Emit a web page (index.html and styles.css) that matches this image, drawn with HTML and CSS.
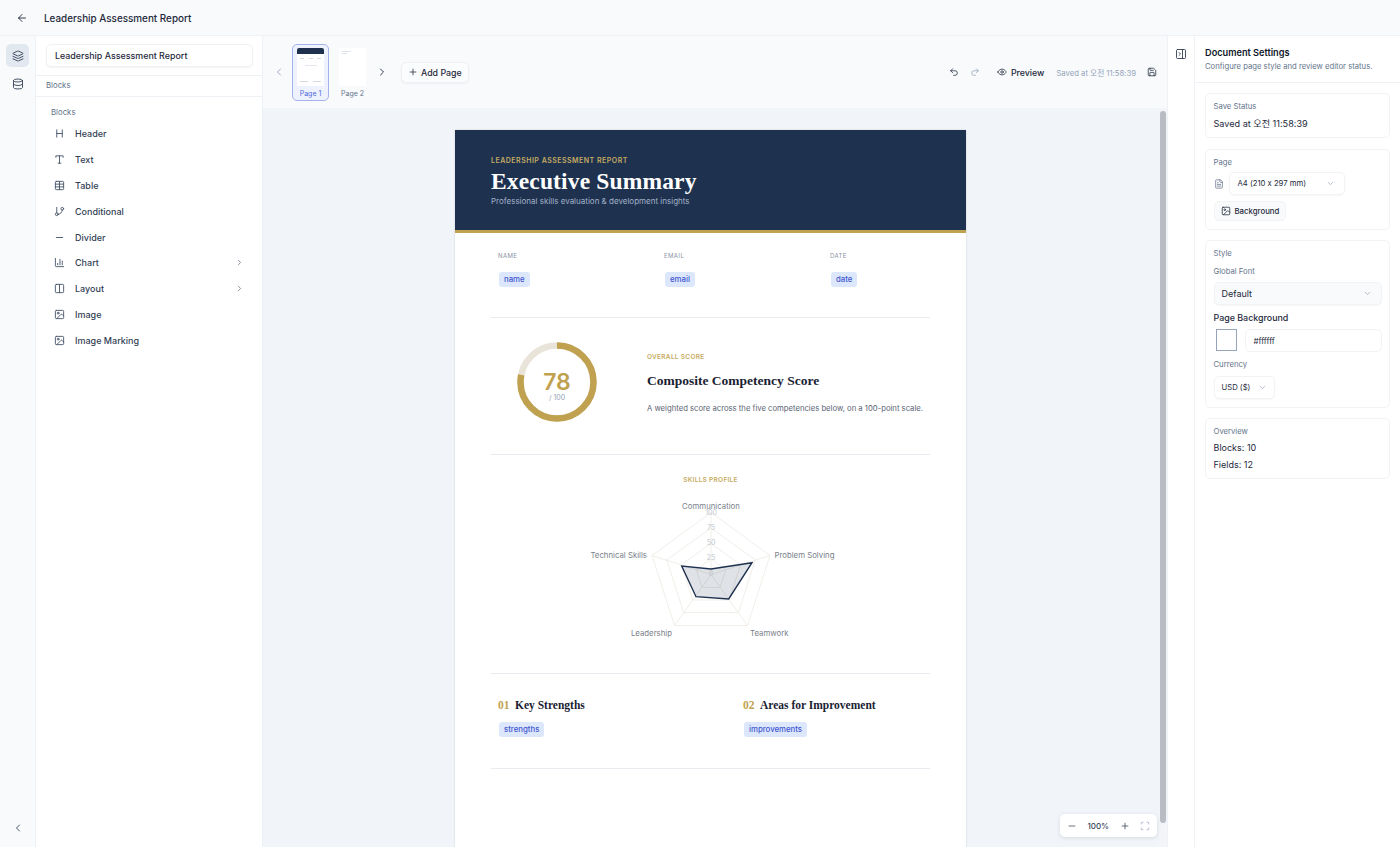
FILE: index.html
```html
<!DOCTYPE html>
<html lang="en">
<head>
    <meta charset="UTF-8">
    <title>Leadership Assessment Report</title>
    <link rel="stylesheet" href="styles.css">
</head>
<body>
    <svg class="sprite" xmlns="http://www.w3.org/2000/svg">
        <symbol id="i-back" viewBox="0 0 24 24"><path d="M12 19l-7-7 7-7M19 12H5"/></symbol>
        <symbol id="i-layers" viewBox="0 0 24 24"><path d="m12.83 2.18a2 2 0 0 0-1.66 0L2.6 6.08a1 1 0 0 0 0 1.83l8.58 3.91a2 2 0 0 0 1.66 0l8.58-3.9a1 1 0 0 0 0-1.83Z"/><path d="m22 17.65-9.17 4.16a2 2 0 0 1-1.66 0L2 17.65"/><path d="m22 12.65-9.17 4.16a2 2 0 0 1-1.66 0L2 12.65"/></symbol>
        <symbol id="i-db" viewBox="0 0 24 24"><ellipse cx="12" cy="5" rx="9" ry="3"/><path d="M3 5V19A9 3 0 0 0 21 19V5"/><path d="M3 12A9 3 0 0 0 21 12"/></symbol>
        <symbol id="i-heading" viewBox="0 0 24 24"><path d="M6 12h12M6 20V4M18 20V4"/></symbol>
        <symbol id="i-type" viewBox="0 0 24 24"><path d="M4 7V4h16v3M9 20h6M12 4v16"/></symbol>
        <symbol id="i-table" viewBox="0 0 24 24"><rect x="3" y="3" width="18" height="18" rx="2"/><path d="M12 3v18M3 9h18M3 15h18"/></symbol>
        <symbol id="i-branch" viewBox="0 0 24 24"><path d="M6 3v12"/><circle cx="18" cy="6" r="3"/><circle cx="6" cy="18" r="3"/><path d="M18 9a9 9 0 0 1-9 9"/></symbol>
        <symbol id="i-minus" viewBox="0 0 24 24"><path d="M5 12h14"/></symbol>
        <symbol id="i-chart" viewBox="0 0 24 24"><path d="M3 3v16a2 2 0 0 0 2 2h16M18 17V9M13 17V5M8 17v-3"/></symbol>
        <symbol id="i-columns" viewBox="0 0 24 24"><rect x="3" y="3" width="18" height="18" rx="2"/><path d="M12 3v18"/></symbol>
        <symbol id="i-image" viewBox="0 0 24 24"><rect x="3" y="3" width="18" height="18" rx="2"/><circle cx="9" cy="9" r="2"/><path d="m21 15-3.086-3.086a2 2 0 0 0-2.828 0L6 21"/></symbol>
        <symbol id="i-right" viewBox="0 0 24 24"><path d="m9 18 6-6-6-6"/></symbol>
        <symbol id="i-left" viewBox="0 0 24 24"><path d="m15 18-6-6 6-6"/></symbol>
        <symbol id="i-down" viewBox="0 0 24 24"><path d="m6 9 6 6 6-6"/></symbol>
        <symbol id="i-plus" viewBox="0 0 24 24"><path d="M5 12h14M12 5v14"/></symbol>
        <symbol id="i-undo" viewBox="0 0 24 24"><path d="M9 14 4 9l5-5"/><path d="M4 9h10.5a5.5 5.5 0 0 1 5.5 5.5a5.5 5.5 0 0 1-5.5 5.5H11"/></symbol>
        <symbol id="i-redo" viewBox="0 0 24 24"><path d="m15 14 5-5-5-5"/><path d="M20 9H9.5A5.5 5.5 0 0 0 4 14.5A5.5 5.5 0 0 0 9.5 20H13"/></symbol>
        <symbol id="i-eye" viewBox="0 0 24 24"><path d="M2 12s3-7 10-7 10 7 10 7-3 7-10 7-10-7-10-7Z"/><circle cx="12" cy="12" r="3"/></symbol>
        <symbol id="i-save" viewBox="0 0 24 24"><path d="M15.2 3a2 2 0 0 1 1.4.6l3.8 3.8a2 2 0 0 1 .6 1.4V19a2 2 0 0 1-2 2H5a2 2 0 0 1-2-2V5a2 2 0 0 1 2-2z"/><path d="M17 21v-7a1 1 0 0 0-1-1H8a1 1 0 0 0-1 1v7"/><path d="M7 3v4a1 1 0 0 0 1 1h7"/></symbol>
        <symbol id="i-panel" viewBox="0 0 24 24"><rect x="3" y="3" width="18" height="18" rx="2"/><path d="M15 3v18M8 9l3 3-3 3"/></symbol>
        <symbol id="i-file" viewBox="0 0 24 24"><path d="M15 2H6a2 2 0 0 0-2 2v16a2 2 0 0 0 2 2h12a2 2 0 0 0 2-2V7Z"/><path d="M14 2v4a2 2 0 0 0 2 2h4M10 9H8M16 13H8M16 17H8"/></symbol>
        <symbol id="i-fit" viewBox="0 0 24 24"><path d="M3 7V5a2 2 0 0 1 2-2h2M17 3h2a2 2 0 0 1 2 2v2M21 17v2a2 2 0 0 1-2 2h-2M7 21H5a2 2 0 0 1-2-2v-2"/></symbol>
    </svg>

    <header class="topbar">
        <svg class="icon back-icon"><use href="#i-back"/></svg>
        <span class="doc-title">Leadership Assessment Report</span>
    </header>

    <div class="workspace">
        <!-- left icon rail -->
        <nav class="rail">
            <button class="rail-btn active"><svg class="icon"><use href="#i-layers"/></svg></button>
            <button class="rail-btn"><svg class="icon"><use href="#i-db"/></svg></button>
            <button class="rail-btn collapse"><svg class="icon"><use href="#i-left"/></svg></button>
        </nav>

        <!-- blocks panel -->
        <aside class="blocks-panel">
            <div class="name-wrap"><div class="name-input">Leadership Assessment Report</div></div>
            <div class="tab-label">Blocks</div>
            <div class="block-list">
                <div class="group-label">Blocks</div>
                <div class="block-item"><svg class="icon"><use href="#i-heading"/></svg><span>Header</span></div>
                <div class="block-item"><svg class="icon"><use href="#i-type"/></svg><span>Text</span></div>
                <div class="block-item"><svg class="icon"><use href="#i-table"/></svg><span>Table</span></div>
                <div class="block-item"><svg class="icon"><use href="#i-branch"/></svg><span>Conditional</span></div>
                <div class="block-item"><svg class="icon"><use href="#i-minus"/></svg><span>Divider</span></div>
                <div class="block-item"><svg class="icon"><use href="#i-chart"/></svg><span>Chart</span><svg class="icon more"><use href="#i-right"/></svg></div>
                <div class="block-item"><svg class="icon"><use href="#i-columns"/></svg><span>Layout</span><svg class="icon more"><use href="#i-right"/></svg></div>
                <div class="block-item"><svg class="icon"><use href="#i-image"/></svg><span>Image</span></div>
                <div class="block-item"><svg class="icon"><use href="#i-image"/></svg><span>Image Marking</span></div>
            </div>
        </aside>

        <!-- editor -->
        <main class="editor">
            <div class="toolbar">
                <svg class="icon pager dim"><use href="#i-left"/></svg>
                <div class="thumb-wrap selected">
                    <div class="thumb">
                        <div class="thumb-head"></div>
                        <div class="thumb-row"><i></i><i></i><i></i></div>
                        <div class="thumb-score"><i></i></div>
                        <div class="thumb-row thumb-low"><i></i><i></i></div>
                    </div>
                    <span>Page 1</span>
                </div>
                <div class="thumb-wrap">
                    <div class="thumb blank"><div class="thumb-line"></div><div class="thumb-line short"></div></div>
                    <span>Page 2</span>
                </div>
                <svg class="icon pager"><use href="#i-right"/></svg>
                <button class="add-page"><svg class="icon"><use href="#i-plus"/></svg>Add Page</button>
                <div class="toolbar-right">
                    <svg class="icon tool"><use href="#i-undo"/></svg>
                    <svg class="icon tool dim"><use href="#i-redo"/></svg>
                    <div class="preview-btn"><svg class="icon"><use href="#i-eye"/></svg>Preview</div>
                    <span class="saved">Saved at 오전 11:58:39</span>
                    <svg class="icon tool"><use href="#i-save"/></svg>
                </div>
            </div>

            <div class="canvas">
                <article class="page">
                    <section class="hero">
                        <div class="eyebrow">LEADERSHIP ASSESSMENT REPORT</div>
                        <h1>Executive Summary</h1>
                        <p>Professional skills evaluation &amp; development insights</p>
                    </section>

                    <div class="page-body">
                        <section class="info-row">
                            <div class="info-cell"><label>NAME</label><span class="chip">name</span></div>
                            <div class="info-cell"><label>EMAIL</label><span class="chip">email</span></div>
                            <div class="info-cell"><label>DATE</label><span class="chip">date</span></div>
                        </section>

                        <section class="score-row">
                            <div class="ring">
                                <svg width="80" height="80" viewBox="0 0 80 80">
                                    <circle cx="40" cy="40" r="36.5" fill="none" stroke="#e8e4d9" stroke-width="6.5"/>
                                    <circle cx="40" cy="40" r="36.5" fill="none" stroke="#bfa14f" stroke-width="6.5" stroke-dasharray="178.9 229.3" transform="rotate(-90 40 40)"/>
                                </svg>
                                <div class="ring-text"><b>78</b><span>/ 100</span></div>
                            </div>
                            <div class="score-text">
                                <div class="gold-label">OVERALL SCORE</div>
                                <h2>Composite Competency Score</h2>
                                <p>A weighted score across the five competencies below, on a 100-point scale.</p>
                            </div>
                        </section>

                        <section class="skills">
                            <div class="gold-label">SKILLS PROFILE</div>
                            <svg class="radar" width="260" height="150" viewBox="0 0 260 150">
                                <g class="radar-grid">
                                    <polygon points="130,12.5 189,55.5 166.5,125.5 93.5,125.5 71,55.5"/>
                                    <polygon points="130,28 174.2,59.8 157.4,112.6 102.6,112.6 85.8,59.8"/>
                                    <polygon points="130,43.5 159.5,64.7 148.2,100 111.8,100 100.5,64.7"/>
                                    <polygon points="130,59 144.7,69.6 139.1,87.4 120.9,87.4 115.3,69.6"/>
                                    <path d="M130 74.5V12.5M130 74.5L189 55.5M130 74.5L166.5 125.5M130 74.5L93.5 125.5M130 74.5L71 55.5"/>
                                </g>
                                <polygon class="radar-data" points="130,69 171,62.7 147.7,99 115,96.7 100.7,66"/>
                                <g class="radar-ticks">
                                    <text x="130" y="14.5">100</text><text x="130" y="29.5">75</text><text x="130" y="44.5">50</text><text x="130" y="59.5">25</text><text x="130" y="75.5">0</text>
                                </g>
                                <g class="radar-labels">
                                    <text x="130" y="9" text-anchor="middle">Communication</text>
                                    <text x="193.5" y="57.5">Problem Solving</text>
                                    <text x="169" y="135.5">Teamwork</text>
                                    <text x="91" y="135.5" text-anchor="end">Leadership</text>
                                    <text x="66" y="57.5" text-anchor="end">Technical Skills</text>
                                </g>
                            </svg>
                        </section>

                        <section class="two-col">
                            <div class="col">
                                <h3><em>01</em>Key Strengths</h3>
                                <span class="chip">strengths</span>
                            </div>
                            <div class="col">
                                <h3><em>02</em>Areas for Improvement</h3>
                                <span class="chip">improvements</span>
                            </div>
                        </section>
                    </div>
                </article>

                <div class="scrollbar"><div class="thumb-bar"></div></div>

                <div class="zoom-box">
                    <svg class="icon"><use href="#i-minus"/></svg>
                    <span>100%</span>
                    <svg class="icon"><use href="#i-plus"/></svg>
                    <svg class="icon faint"><use href="#i-fit"/></svg>
                </div>
            </div>
        </main>

        <!-- right rail + settings -->
        <div class="right-rail"><svg class="icon"><use href="#i-panel"/></svg></div>
        <aside class="settings">
            <div class="settings-head">
                <h4>Document Settings</h4>
                <p>Configure page style and review editor status.</p>
            </div>
            <div class="settings-body">
                <div class="card">
                    <div class="card-label">Save Status</div>
                    <div class="card-value">Saved at 오전 11:58:39</div>
                </div>
                <div class="card page-card">
                    <div class="card-label">Page</div>
                    <div class="page-size">
                        <svg class="icon"><use href="#i-file"/></svg>
                        <div class="select size-select">A4 (210 x 297 mm)<svg class="icon"><use href="#i-down"/></svg></div>
                    </div>
                    <button class="bg-btn"><svg class="icon"><use href="#i-image"/></svg>Background</button>
                </div>
                <div class="card style-card">
                    <div class="card-label">Style</div>
                    <div class="card-label second">Global Font</div>
                    <div class="select font-select">Default<svg class="icon"><use href="#i-down"/></svg></div>
                    <div class="field-title">Page Background</div>
                    <div class="color-row">
                        <div class="swatch-wrap"><div class="swatch"></div></div>
                        <div class="color-input">#ffffff</div>
                    </div>
                    <div class="card-label third">Currency</div>
                    <div class="select currency-select">USD ($)<svg class="icon"><use href="#i-down"/></svg></div>
                </div>
                <div class="card overview">
                    <div class="card-label">Overview</div>
                    <div class="stat first">Blocks: 10</div>
                    <div class="stat">Fields: 12</div>
                </div>
            </div>
        </aside>
    </div>
</body>
</html>
```

FILE: styles.css
```css
* {
    box-sizing: border-box;
}
html, body {
    margin: 0;
    height: 100%;
    overflow: hidden;
}
body {
    font-family: 'Inter', 'Noto Sans CJK KR', sans-serif;
    font-feature-settings: "calt" 0;
    color: #0f172a;
    background-color: #fff;
    display: flex;
    flex-direction: column;
}
.sprite {
    display: none;
}
.icon {
    width: 12px;
    height: 12px;
    fill: none;
    stroke: currentColor;
    stroke-width: 1.8;
    stroke-linecap: round;
    stroke-linejoin: round;
    flex-shrink: 0;
}
button {
    font-family: inherit;
    border: none;
    background: none;
    padding: 0;
}

/* top bar */
.topbar {
    height: 36px;
    flex-shrink: 0;
    display: flex;
    align-items: center;
    padding: 1px 0 0 16px;
    background-color: #f8fafc;
    border-bottom: 1px solid #eef1f5;
}
.back-icon {
    color: #1e293b;
}
.doc-title {
    margin-left: 16px;
    font-size: 9.9px;
    font-weight: 500;
    color: #1e293b;
}
.workspace {
    flex: 1;
    min-height: 0;
    display: flex;
}

/* left rail */
.rail {
    width: 36px;
    flex-shrink: 0;
    display: flex;
    flex-direction: column;
    align-items: center;
    padding-top: 8px;
    gap: 5px;
    background-color: #f8fafc;
    border-right: 1px solid #eef1f5;
}
.rail-btn {
    width: 23px;
    height: 23px;
    border-radius: 5px;
    display: flex;
    align-items: center;
    justify-content: center;
    color: #334155;
}
.rail-btn.active {
    background-color: #e2e8f0;
}
.rail-btn.collapse {
    margin-top: auto;
    margin-bottom: 8px;
}

/* blocks panel */
.blocks-panel {
    width: 227px;
    flex-shrink: 0;
    background-color: #fff;
    border-right: 1px solid #eef1f5;
}
.name-wrap {
    padding: 8px 9px 8px 10px;
    border-bottom: 1px solid #eef1f5;
}
.name-input {
    height: 23px;
    line-height: 22px;
    padding-left: 8px;
    font-size: 8.9px;
    font-weight: 500;
    color: #1e293b;
    border: 1px solid #eef1f5;
    border-radius: 5px;
    box-shadow: 0 1px 2px rgba(15,23,42,0.05);
}
.tab-label {
    height: 21px;
    line-height: 19px;
    padding-left: 10px;
    font-size: 7.8px;
    color: #64748b;
    border-bottom: 1px solid #eef1f5;
}
.block-list {
    padding: 9px 18px 0 15px;
}
.group-label {
    font-size: 7.8px;
    color: #64748b;
    line-height: 12px;
    margin-bottom: 3px;
}
.block-item {
    height: 25.8px;
    display: flex;
    align-items: center;
    font-size: 9px;
    font-weight: 500;
    color: #334155;
    padding-left: 2.5px;
}
.block-item .icon {
    width: 11px;
    height: 11px;
    stroke-width: 2;
    color: #475569;
}
.block-item span {
    margin-left: 10.5px;
}
.block-item .more {
    margin-left: auto;
    width: 9px;
    height: 9px;
    color: #64748b;
}

/* editor */
.editor {
    flex: 1;
    min-width: 0;
    display: flex;
    flex-direction: column;
    background-color: #f1f5f9;
}
.toolbar {
    height: 72px;
    flex-shrink: 0;
    display: flex;
    align-items: center;
    padding: 0 10px;
    background-color: #f8fafc;
}
.pager {
    color: #1e293b;
    margin-right: 7px;
}
.pager.dim {
    color: #94a3b8;
}
.thumb-wrap {
    width: 37px;
    height: 57px;
    margin-right: 5px;
    padding-top: 3px;
    border: 1px solid transparent;
    border-radius: 5px;
    text-align: center;
    font-size: 7px;
    color: #64748b;
}
.thumb-wrap span {
    display: block;
    margin-top: 3px;
}
.thumb-wrap.selected {
    border-color: #a5b4e8;
    background-color: #eef2ff;
    color: #4f6bd8;
}
.thumb {
    width: 27px;
    height: 38px;
    margin: 0 auto;
    background-color: #fff;
    overflow: hidden;
}
.thumb-head {
    height: 6px;
    background-color: #1e3250;
    border-radius: 2px 2px 0 0;
}
.thumb-row {
    display: flex;
    justify-content: space-between;
    padding: 4px 3px 0;
}
.thumb-row i {
    width: 4px;
    height: 1px;
    background-color: #d5dbe5;
}
.thumb-score {
    margin: 6px auto 0;
    width: 12px;
    height: 6px;
    border-top: 1px solid #e2e6ec;
}
.thumb-low {
    padding-top: 10px;
}
.thumb-low i {
    width: 8px;
}
.thumb.blank {
    padding: 3px;
}
.thumb-line {
    width: 9px;
    height: 1px;
    margin-bottom: 1px;
    background-color: #dfe3ea;
}
.thumb-line.short {
    width: 5px;
}
.add-page {
    height: 21px;
    margin-left: 6px;
    padding: 0 6px;
    display: flex;
    align-items: center;
    gap: 3px;
    font-size: 8.8px;
    font-weight: 500;
    color: #1e293b;
    background-color: #fbfcfd;
    border: 1px solid #eef1f5;
    border-radius: 5px;
    box-shadow: 0 1px 2px rgba(15,23,42,0.05);
}
.add-page .icon {
    width: 10px;
    height: 10px;
}
.toolbar-right {
    margin-left: auto;
    display: flex;
    align-items: center;
}
.tool {
    width: 10px;
    height: 10px;
    color: #1e293b;
}
.tool.dim {
    margin-left: 11px;
    color: #94a3b8;
}
.preview-btn {
    margin-left: 17px;
    display: flex;
    align-items: center;
    gap: 4px;
    font-size: 8.8px;
    font-weight: 500;
    color: #1e293b;
}
.preview-btn .icon {
    width: 10px;
    height: 10px;
}
.saved {
    margin: 0 11px 0 12px;
    font-size: 7.7px;
    color: #94a3b8;
}

/* canvas and page */
.canvas {
    flex: 1;
    min-height: 0;
    position: relative;
    overflow: hidden;
    padding: 22px 9px 0 0;
    display: flex;
    justify-content: center;
}
.page {
    width: 511px;
    height: 900px;
    flex-shrink: 0;
    background-color: #fff;
    box-shadow: 0 0 2px rgba(15,23,42,0.15);
}
.hero {
    height: 103px;
    padding: 26px 36px 0;
    background-color: #1e3250;
    border-bottom: 3px solid #bfa14f;
}
.eyebrow {
    font-size: 7px;
    font-weight: 600;
    letter-spacing: 0.5px;
    line-height: 9px;
    color: #c5ab62;
}
.hero h1 {
    margin: 2px 0 0;
    font-family: 'Liberation Serif', serif;
    font-weight: 700;
    font-size: 23.5px;
    letter-spacing: 0.15px;
    line-height: 28px;
    color: #fff;
}
.hero p {
    margin: 1px 0 0;
    font-size: 8px;
    line-height: 11px;
    color: #a3b1c6;
}
.page-body {
    padding: 0 36px;
}
.info-row {
    height: 85px;
    padding: 19px 0 0 7px;
    display: grid;
    grid-template-columns: repeat(3, 166px);
    border-bottom: 1px solid #e8ebef;
}
.info-cell label {
    display: block;
    font-size: 6px;
    letter-spacing: 0.4px;
    line-height: 8px;
    color: #8a93a3;
    margin-bottom: 6px;
}
.chip {
    display: inline-block;
    margin-left: 1px;
    padding: 0 5px;
    height: 15px;
    line-height: 15px;
    font-size: 7.8px;
    font-weight: 500;
    color: #3f56d0;
    background-color: #dde7fb;
    border-radius: 3px;
}
.score-row {
    height: 137px;
    display: flex;
    align-items: flex-start;
    padding: 24px 0 0 26px;
    border-bottom: 1px solid #e8ebef;
}
.ring {
    width: 80px;
    height: 80px;
    position: relative;
    flex-shrink: 0;
}
.ring-text {
    position: absolute;
    inset: 0;
    padding-top: 7px;
    display: flex;
    flex-direction: column;
    align-items: center;
    justify-content: center;
    line-height: 1;
}
.ring-text b {
    font-size: 23px;
    font-weight: 600;
    color: #bfa14f;
}
.ring-text span {
    font-size: 7px;
    color: #94a3b8;
}
.score-text {
    margin: 11px 0 0 50px;
}
.gold-label {
    font-size: 6.5px;
    font-weight: 600;
    letter-spacing: 0.3px;
    line-height: 9px;
    color: #c5ab62;
}
.score-text h2 {
    margin: 11px 0 0;
    font-family: 'Liberation Serif', serif;
    font-weight: 700;
    font-size: 13.5px;
    line-height: 16px;
    color: #1a2233;
}
.score-text p {
    margin: 13.5px 0 0;
    font-size: 7.7px;
    line-height: 11px;
    color: #5b6474;
    white-space: nowrap;
}
.skills {
    height: 219px;
    padding-top: 21px;
    text-align: center;
    border-bottom: 1px solid #e8ebef;
}
.radar {
    display: block;
    margin: 15px auto 0;
}
.radar-grid polygon, .radar-grid path {
    fill: none;
    stroke: #f0efe9;
    stroke-width: 1;
}
.radar-data {
    fill: rgba(30,50,80,0.14);
    stroke: #1e3250;
    stroke-width: 1.4;
}
.radar-ticks text {
    font-size: 7px;
    fill: #c2c7cf;
    text-anchor: middle;
}
.radar-labels text {
    font-size: 7.8px;
    fill: #7a7f8a;
}
.two-col {
    height: 95px;
    padding: 23px 0 0 7px;
    display: grid;
    grid-template-columns: 245px 1fr;
    border-bottom: 1px solid #e8ebef;
}
.col h3 {
    margin: 0 0 3px;
    font-family: 'Liberation Serif', serif;
    font-weight: 700;
    font-size: 11.5px;
    line-height: 16px;
    color: #1a2233;
}
.col h3 em {
    font-style: normal;
    color: #bfa14f;
    margin-right: 5.5px;
}

/* scrollbar and zoom */
.scrollbar {
    position: absolute;
    top: 0;
    right: 0;
    bottom: 0;
    width: 8px;
    background-color: #f3f5f8;
}
.thumb-bar {
    margin: 3px 1px 0;
    height: 712px;
    border-radius: 3px;
    background-color: #b9bdc3;
}
.zoom-box {
    position: absolute;
    right: 10px;
    bottom: 10px;
    width: 97px;
    height: 23px;
    padding: 0 7px;
    display: flex;
    align-items: center;
    justify-content: space-between;
    font-size: 8px;
    font-weight: 500;
    color: #334155;
    background-color: #fff;
    border-radius: 5px;
    box-shadow: 0 1px 4px rgba(15,23,42,0.12);
}
.zoom-box .icon {
    width: 10px;
    height: 10px;
}
.zoom-box .faint {
    color: #94a3b8;
}

/* right side */
.right-rail {
    width: 28px;
    flex-shrink: 0;
    display: flex;
    justify-content: center;
    padding-top: 12px;
    color: #334155;
    border-left: 1px solid #eef1f5;
    border-right: 1px solid #eef1f5;
}
.settings {
    width: 205px;
    flex-shrink: 0;
}
.settings-head {
    height: 47px;
    padding: 10px 10px 0;
    border-bottom: 1px solid #eef1f5;
}
.settings-head h4 {
    margin: 0;
    font-size: 9.2px;
    font-weight: 600;
    line-height: 13px;
    color: #0f172a;
}
.settings-head p {
    margin: 2px 0 0;
    font-size: 7.7px;
    line-height: 11px;
    color: #64748b;
}
.settings-body {
    padding: 10px 10px 0;
    display: flex;
    flex-direction: column;
    gap: 10.5px;
}
.card {
    padding: 7px 7.5px;
    border: 1px solid #f1f3f6;
    border-radius: 5px;
}
.card.page-card {
    padding-bottom: 8px;
}
.card.style-card {
    padding-bottom: 8px;
}
.card.overview {
    padding-bottom: 5px;
}
.card-label {
    font-size: 7.7px;
    line-height: 11px;
    color: #64748b;
}
.card-label.second {
    margin-top: 6.5px;
    margin-bottom: 5.5px;
}
.card-label.third {
    margin-top: 7.5px;
    margin-bottom: 5.5px;
}
.card-value {
    margin-top: 5px;
    font-size: 9.1px;
    line-height: 13px;
    color: #1e293b;
}
.page-size {
    margin-top: 4.5px;
    display: flex;
    align-items: center;
    gap: 5px;
}
.page-size > .icon {
    width: 10px;
    height: 10px;
    color: #64748b;
}
.select {
    display: flex;
    align-items: center;
    justify-content: space-between;
    color: #1e293b;
    border: 1px solid #f1f3f6;
    border-radius: 5px;
    box-shadow: 0 1px 2px rgba(15,23,42,0.04);
}
.select .icon {
    width: 9px;
    height: 9px;
    color: #94a3b8;
}
.size-select {
    width: 116px;
    height: 23px;
    padding: 0 9px 0 8px;
    font-size: 7.7px;
}
.bg-btn {
    margin-top: 5.5px;
    height: 20px;
    padding: 0 6px;
    display: flex;
    align-items: center;
    gap: 4px;
    font-size: 7.8px;
    font-weight: 500;
    color: #1e293b;
    background-color: #f8fafc;
    border: 1px solid #f1f3f6;
    border-radius: 5px;
}
.bg-btn .icon {
    width: 10px;
    height: 10px;
}
.font-select {
    height: 23px;
    padding: 0 9px 0 7px;
    font-size: 9px;
    background-color: #f8fafc;
}
.field-title {
    margin-top: 6px;
    font-size: 8.9px;
    line-height: 13px;
    font-weight: 500;
    color: #1e293b;
}
.color-row {
    margin-top: 4.5px;
    display: flex;
    gap: 6px;
}
.swatch-wrap {
    width: 25px;
    height: 23px;
    padding: 0 2px 1px;
}
.swatch {
    width: 100%;
    height: 100%;
    background-color: #fff;
    border: 1px solid #94a3b8;
}
.color-input {
    flex: 1;
    height: 23px;
    line-height: 22px;
    padding-left: 8px;
    font-size: 8px;
    color: #1e293b;
    border: 1px solid #f1f3f6;
    border-radius: 5px;
}
.currency-select {
    width: 61px;
    height: 23px;
    padding: 0 7px 0 7px;
    font-size: 7.7px;
}
.stat {
    font-size: 9px;
    line-height: 17px;
    color: #1e293b;
}
.stat.first {
    margin-top: 1.5px;
}
```
